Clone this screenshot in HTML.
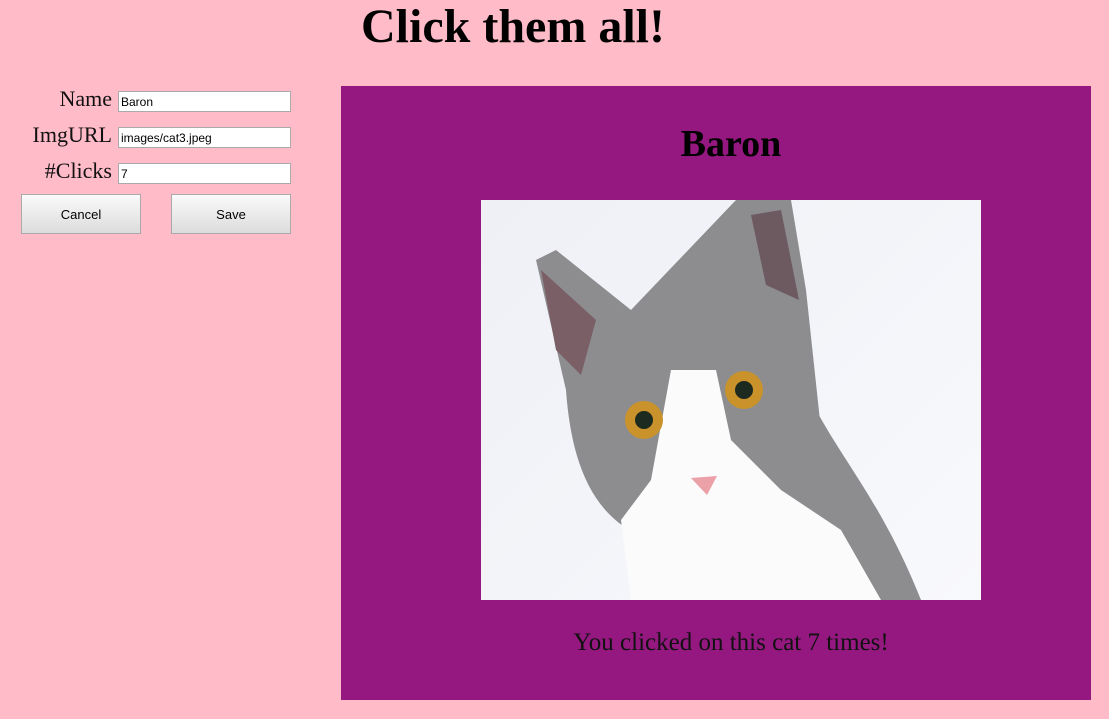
<!DOCTYPE html>
<html><head><style>
body{margin:0;background:#ffbbc8;width:1109px;height:719px;position:relative;overflow:hidden;font-family:"Liberation Serif",serif;}
h1{position:absolute;left:0;width:1026px;top:0;margin:0;text-align:center;font-size:48px;line-height:54px;font-weight:bold;}
.lab{position:absolute;right:997px;font-size:22px;line-height:22px;color:#111;}
input{position:absolute;left:118px;width:173px;height:21px;box-sizing:border-box;border:1px solid #aaa;font:12px "Liberation Sans",sans-serif;padding:1px 2px;margin:0;}
.btn{position:absolute;top:194px;width:120px;height:40px;box-sizing:border-box;border:1px solid #aaa;background:linear-gradient(#fafafa,#dcdcdc);font:13px "Liberation Sans",sans-serif;text-align:center;line-height:40px;}
.box{position:absolute;left:341px;top:86px;width:750px;height:614px;background:#951880;}
h2{position:absolute;left:0;width:780px;top:36px;margin:0;text-align:center;font-size:38px;line-height:44px;}
.img{position:absolute;left:140px;top:114px;width:500px;height:400px;background:linear-gradient(135deg,#eef0f6,#f8f9fc);overflow:hidden;}
.txt{position:absolute;left:0;width:780px;top:543px;text-align:center;font-size:25px;line-height:28px;color:#111;}
</style></head><body>
<h1>Click them all!</h1>
<div class="lab" style="top:88px">Name</div>
<div class="lab" style="top:124px">ImgURL</div>
<div class="lab" style="top:160px">#Clicks</div>
<input style="top:91px" value="Baron">
<input style="top:127px" value="images/cat3.jpeg">
<input style="top:163px" value="7">
<div class="btn" style="left:21px">Cancel</div>
<div class="btn" style="left:171px">Save</div>
<div class="box">
<h2>Baron</h2>
<div class="img"><svg width="500" height="400">
<path d="M330 200 C360 260 400 300 440 400 L300 400 Z" fill="#8d8d8f"/>
<path d="M55 60 L75 50 L150 110 L255 0 L310 0 L325 90 L340 230 C340 300 300 340 240 345 L170 340 C110 320 90 260 85 190 Z" fill="#8d8d8f"/>
<path d="M190 170 L235 170 L250 240 L300 290 L360 330 L400 400 L150 400 L140 320 L170 280 Z" fill="#fbfbfb"/>
<path d="M60 70 L115 120 L100 175 L75 150 Z" fill="#7a5f66"/>
<path d="M270 15 L300 10 L318 100 L285 85 Z" fill="#6d5a60"/>
<circle cx="163" cy="220" r="19" fill="#c9922a"/><circle cx="163" cy="220" r="9" fill="#1d2a20"/>
<circle cx="263" cy="190" r="19" fill="#c9922a"/><circle cx="263" cy="190" r="9" fill="#1d2a20"/>
<path d="M210 278 L236 276 L226 295 Z" fill="#eca0a8"/>
</svg></div>
<div class="txt">You clicked on this cat 7 times!</div>
</div>
</body></html>
